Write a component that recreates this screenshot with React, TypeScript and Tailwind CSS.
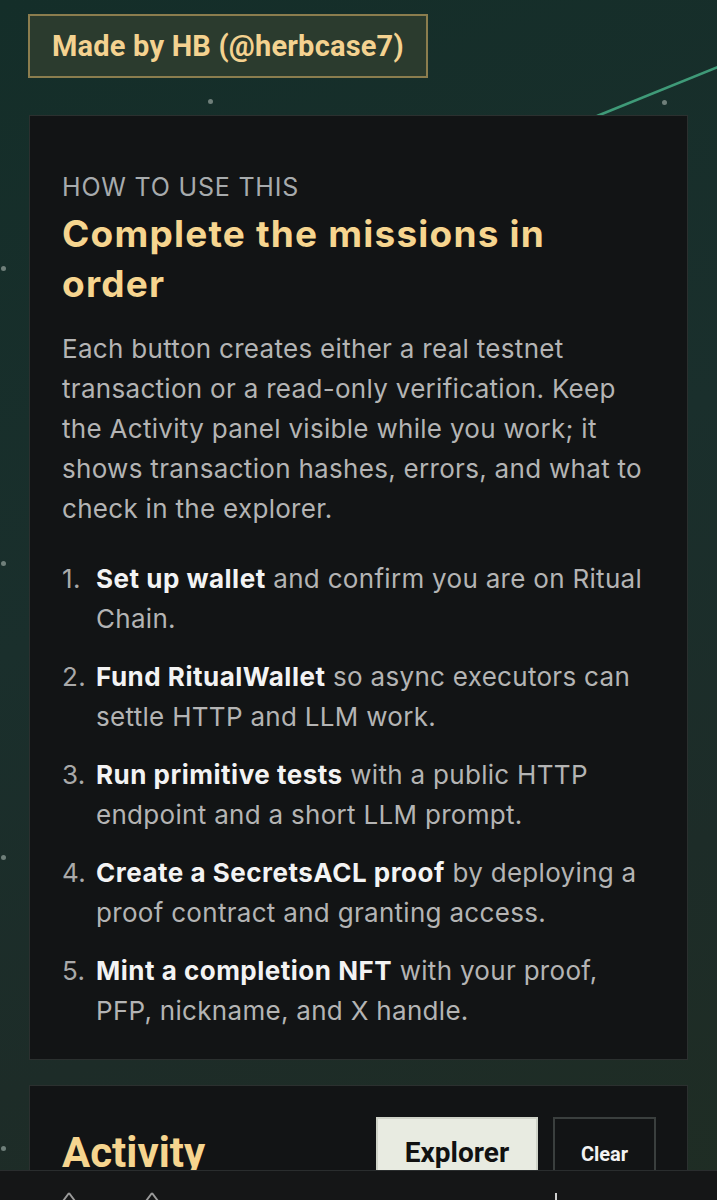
import React from "react";

const steps = [
  { bold: "Set up wallet", rest: " and confirm you are on Ritual Chain." },
  { bold: "Fund RitualWallet", rest: " so async executors can settle HTTP and LLM work." },
  { bold: "Run primitive tests", rest: " with a public HTTP endpoint and a short LLM prompt." },
  { bold: "Create a SecretsACL proof", rest: " by deploying a proof contract and granting access." },
  { bold: "Mint a completion NFT", rest: " with your proof, PFP, nickname, and X handle." },
];

const dots = [
  "left-[208px] top-[99px]",
  "left-[662px] top-[100px]",
  "left-[1px] top-[266px]",
  "left-[1px] top-[561px]",
  "left-[1px] top-[855px]",
  "left-[1px] top-[1146px]",
];

export default function App() {
  return (
    <div className="relative min-h-[1200px] overflow-hidden bg-[linear-gradient(160deg,#142e29_0%,#1a2f2c_45%,#1d2c28_75%,#1f2d24_100%)] font-['Inter',sans-serif]">
      {/* decorations */}
      <svg className="absolute left-0 top-0" width="717" height="130">
        <line x1="740" y1="58" x2="597" y2="116" stroke="#3f9a78" strokeWidth="2.5" />
      </svg>
      {dots.map((d, i) => (
        <div key={i} className={`absolute ${d} h-[5px] w-[5px] rounded-full bg-[#6f7f7a]`} />
      ))}

      <div className="relative flex flex-col px-[28px] pt-[14px]">
        <div className="self-start border-2 border-[#8b7d4e] bg-[#2b3b2e] px-[22px] py-[11px] font-['Roboto',sans-serif] text-[29px] font-bold leading-[38px] tracking-[0.2px] text-[#f4d290]">
          Made by HB (@herbcase7)
        </div>

        <section className="mt-[37px] ml-px mr-[1px] border border-[#2b302f] bg-[#121415] px-[32px] pb-[28px] pt-[55px]">
          <p className="text-[25px] leading-[32px] tracking-[0.8px] text-[#a7abad]">HOW TO USE THIS</p>
          <h1 className="mt-[6px] max-w-[560px] text-[37px] font-bold leading-[50px] tracking-[1.2px] text-[#f6d58f]">
            Complete the missions in order
          </h1>
          <p className="mt-[20px] max-w-[582px] text-[26px] leading-[40px] tracking-[0.3px] text-[#b4b4b4]">
            Each button creates either a real testnet transaction or a read-only verification. Keep the Activity panel
            visible while you work; it shows transaction hashes, errors, and what to check in the explorer.
          </p>
          <ol className="mt-[30px] flex flex-col gap-[18px]">
            {steps.map((s, i) => (
              <li key={i} className="flex text-[26px] leading-[40px] tracking-[0.3px] text-[#b4b4b4]">
                <span className="w-[34px] shrink-0 text-[#a9a9a9]">{i + 1}.</span>
                <span>
                  <b className="font-bold tracking-[0.5px] text-[#f3f3f3]">{s.bold}</b>
                  {s.rest}
                </span>
              </li>
            ))}
          </ol>
        </section>

        <section className="mt-[25px] ml-px mr-[1px] flex items-start justify-between border border-[#2b302f] bg-[#121415] pl-[32px] pr-[31px] pt-[31px]">
          <h2 className="mt-[10px] font-['Roboto',sans-serif] text-[42px] font-bold leading-[52px] text-[#f6d58f]">Activity</h2>
          <div className="flex gap-[15px]">
            <button className="h-[70px] w-[162px] border-2 border-[#cfd3c8] bg-[#e8ebe1] pt-[2px] font-['Roboto',sans-serif] text-[28px] font-bold text-[#111]">
              Explorer
            </button>
            <button className="h-[70px] w-[103px] border-2 border-[#3a3f3e] pt-[4px] font-['Roboto',sans-serif] text-[20px] font-bold text-[#f2f2f2]">
              Clear
            </button>
          </div>
        </section>
      </div>

      {/* bottom toolbar */}
      <div className="fixed bottom-0 left-0 h-[30px] w-[717px] border-t border-[#2a2d2e] bg-[#151617]">
        <svg className="absolute left-[62px] top-[21px]" width="14" height="9">
          <path d="M7 1 L1 9 M7 1 L13 9" stroke="#9a9a9a" strokeWidth="2" fill="none" />
        </svg>
        <svg className="absolute left-[145px] top-[21px]" width="14" height="9">
          <path d="M7 1 L1 9 M7 1 L13 9" stroke="#9a9a9a" strokeWidth="2" fill="none" />
        </svg>
        <div className="absolute left-[555px] top-[22px] h-[8px] w-[2px] bg-[#cfcfcf]" />
      </div>
    </div>
  );
}
